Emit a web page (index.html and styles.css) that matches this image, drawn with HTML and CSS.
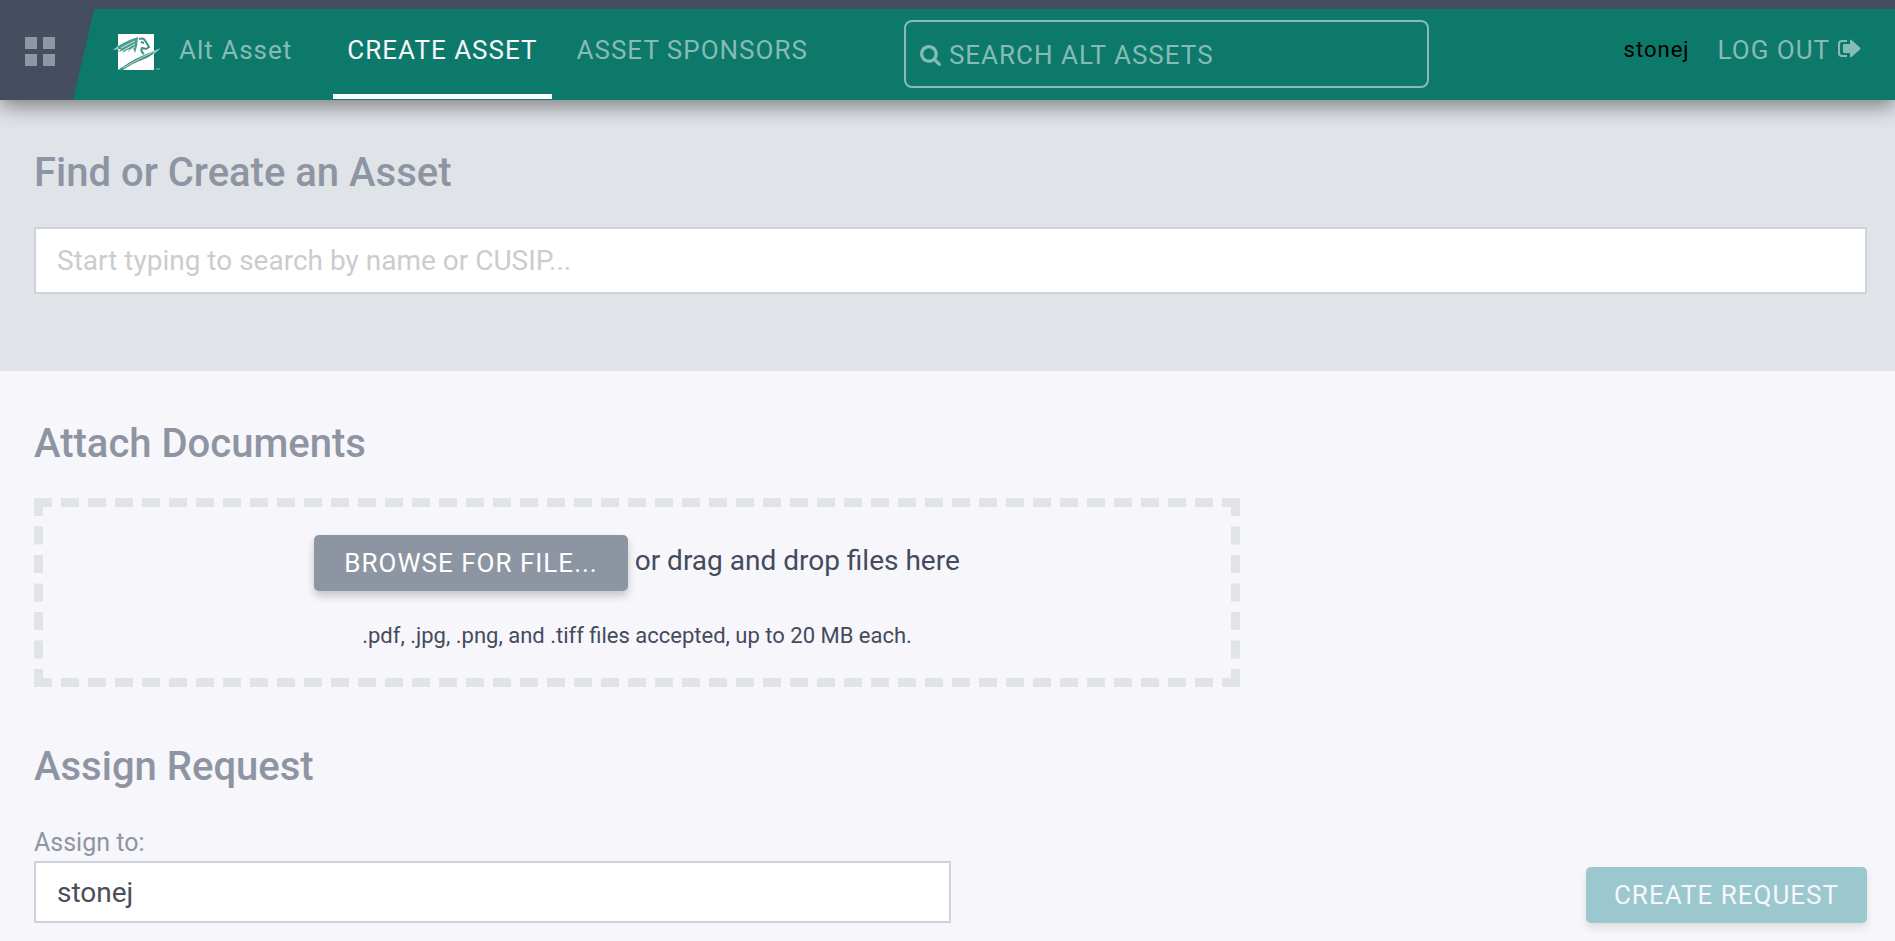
FILE: index.html
```html
<!DOCTYPE html>
<html lang="en">
<head>
<meta charset="utf-8">
<title>Alt Asset</title>
<link rel="stylesheet" href="styles.css">
</head>
<body>
<header class="header">
  <button class="apps" type="button" aria-label="Applications">
    <span class="apps-shape"></span>
    <svg class="apps-icon" viewBox="0 0 30 30" aria-hidden="true"><path d="M0 0h12v12H0zM18 0h12v12H18zM0 17h12v12H0zM18 17h12v12H18z"/></svg>
  </button>
  <a class="brand" href="#">
    <svg class="brand-logo" viewBox="0 0 48 36" aria-hidden="true">
      <path class="logo-paper" d="M5 0h36v36H5z"/>
      <path class="logo-mane" d="M0 16Q9 8 25 3Q25 11 22 19L20 14L15 18L16 15L9 19L11 16L5 18L8 15z"/>
      <path class="logo-gaps" d="M8 14L22 7M11 16L22 10M15 17L22 13"/>
      <path class="logo-head" d="M26 5Q31 3 33 8L36 13L33 15L29 14Q27 17 31 20M28 8L31 9"/>
      <path class="logo-slope" d="M5 36Q19 26 31 21Q39 18 47 14Q38 23 29 26Q20 29 10 36z"/>
      <path class="logo-light" d="M10 34Q22 27 32 22L42 17"/>
      <path class="logo-tips" d="M0 16L5 12V15zM41 17L48 14L41 20z"/>
      <path class="logo-mark" d="M43 35h4"/>
    </svg>
    <span>Alt Asset</span>
  </a>
  <nav class="nav">
    <a class="tab tab-active" href="#">CREATE ASSET</a>
    <a class="tab" href="#">ASSET SPONSORS</a>
  </nav>
  <label class="search">
    <svg class="search-icon" viewBox="0 0 1664 1664" aria-hidden="true"><path d="M1152 704q0-185-131.500-316.500T704 256 387.500 387.500 256 704t131.500 316.500T704 1152t316.500-131.500T1152 704zm512 832q0 52-38 90t-90 38q-54 0-90-38l-343-342q-179 124-399 124-143 0-273.500-55.500t-225-150-150-225T0 704t55.500-273.500 150-225 225-150T704 0t273.500 55.500 225 150 150 225T1408 704q0 220-124 399l343 343q37 37 37 90z"/></svg>
    <input class="search-input" type="text" placeholder="SEARCH ALT ASSETS" aria-label="Search alt assets">
  </label>
  <div class="account">
    <span class="user">stonej</span>
    <a class="logout" href="#">LOG OUT
      <svg class="logout-icon" viewBox="0 0 24 20" aria-hidden="true"><path class="door" d="M10 2H5Q2 2 2 5v9q0 3 3 3h5"/><path class="arrow" d="M7 5h6V1.500q0-1.500 1.500-.5l8.500 7.500q1 1 0 2l-8.500 7.500q-1.500 1-1.500-.5V14H7q-1 0-1-1V6q0-1 1-1z"/></svg></a>
  </div>
</header>
<main>
  <section class="finder">
    <h2 class="title"><label for="asset">Find or Create an Asset</label></h2>
    <input class="field asset-field" id="asset" type="text" placeholder="Start typing to search by name or CUSIP...">
  </section>
  <form class="request">
    <h2 class="title">Attach Documents</h2>
    <div class="dropzone">
      <div class="drop-row">
        <button class="button button-browse" type="button">BROWSE FOR FILE...</button>
        <span>or drag and drop files here</span>
      </div>
      <p class="hint">.pdf, .jpg, .png, and .tiff files accepted, up to 20 MB each.</p>
    </div>
    <h2 class="title">Assign Request</h2>
    <div class="assign">
      <div class="assignee">
        <label class="label" for="assignee">Assign to:</label>
        <input class="field" id="assignee" type="text" value="stonej">
      </div>
      <button class="button button-submit" type="submit" disabled>CREATE REQUEST</button>
    </div>
  </form>
</main>
</body>
</html>
```
FILE: styles.css
```css
* {
  box-sizing: border-box;
}

body {
  margin: 0;
  background: #f7f6fb;
  color: #434b5c;
  font: 400 28px/36px Roboto, sans-serif;
}

button, input {
  font: inherit;
}

.header {
  position: relative;
  z-index: 1;
  display: flex;
  align-items: stretch;
  height: 100px;
  border-top: 9px solid #454d60;
  background: #0c796b;
  box-shadow: 0 6px 20px rgba(0, 0, 0, .45);
  color: #86bcb5;
  font-size: 26px;
  letter-spacing: 1px;
}

.header a {
  color: inherit;
  text-decoration: none;
}

.apps {
  display: flex;
  position: relative;
  flex: none;
  width: 94px;
  padding: 28px 0 0 25px;
  border: 0;
  background: none;
}

.apps-shape {
  position: absolute;
  inset: 0;
  background: linear-gradient(103deg, transparent 80%, rgba(30, 35, 50, .3)), #454d60;
  clip-path: polygon(0 0, 100% 0, 73px 100%, 0 100%);
}

.apps-icon {
  position: relative;
  width: 30px;
  height: 30px;
  fill: #9096a3;
}

.brand {
  display: flex;
  flex: none;
  gap: 18px;
  padding: 23px 0 0 19px;
}

.brand-logo {
  width: 48px;
  height: 36px;
  margin-top: 2px;
}

.logo-paper {
  fill: #fff;
}

.logo-mane {
  fill: #4b9b91;
}

.logo-gaps {
  stroke: #d5e9e6;
  stroke-width: 1;
}

.logo-head {
  fill: none;
  stroke: #3c9287;
  stroke-width: 2;
}

.logo-slope {
  fill: #3c9287;
}

.logo-light {
  fill: none;
  stroke: #b5d7d3;
  stroke-width: 1;
}

.logo-tips {
  fill: #9fccc6;
}

.logo-mark {
  stroke: #86bcb5;
}

.nav {
  display: flex;
  flex: none;
  gap: 11px;
  margin-left: 41px;
}

.tab {
  height: 90px;
  padding: 23px 14px 0;
  border-bottom: 5px solid transparent;
}

.header .tab-active {
  border-color: #fff;
  color: #f7f6fb;
}

.search {
  display: flex;
  align-items: center;
  gap: 8px;
  width: 525px;
  height: 68px;
  margin: 11px 0 0 82px;
  padding: 2px 14px 0;
  border: 2px solid #86bcb5;
  border-radius: 8px;
}

.search-icon {
  flex: none;
  width: 21px;
  height: 21px;
  fill: #86bcb5;
}

.search-input {
  flex: 1;
  min-width: 0;
  padding: 0;
  border: 0;
  outline: 0;
  background: none;
  color: #fff;
  letter-spacing: 1px;
}

.search-input::placeholder {
  color: #86bcb5;
  opacity: 1;
}

.account {
  display: flex;
  gap: 28px;
  margin-left: auto;
  padding: 23px 34px 0 0;
}

.user {
  color: #000;
  font-size: 22px;
}

.logout {
  white-space: nowrap;
}

.logout-icon {
  width: 24px;
  height: 20px;
}

.door {
  fill: none;
  stroke: #86bcb5;
  stroke-width: 2;
}

.arrow {
  fill: #86bcb5;
}

.finder {
  padding: 49px 28px 77px 34px;
  background: #e0e3e8;
}

.title {
  margin: 0;
  color: #8e95a2;
  font-size: 40px;
  font-weight: 500;
  line-height: 48px;
}

.field {
  display: block;
  width: 100%;
  height: 62px;
  padding: 0 21px;
  border: 2px solid #ced2da;
  border-radius: 0;
  outline: 0;
  background: #fff;
  color: #495057;
}

.field::placeholder {
  color: #ccc;
  opacity: 1;
}

.asset-field {
  height: 67px;
  margin-top: 30px;
}

.request {
  padding: 49px 28px 18px 34px;
}

.dropzone {
  width: 65.8%;
  margin: 30px 0 56px;
  padding: 28px 20px 24px;
  border: 9px dashed #e0e4e8;
  text-align: center;
}

.drop-row {
  display: flex;
  justify-content: center;
  gap: 7px;
  line-height: 52px;
}

.button {
  height: 56px;
  padding: 0 28px;
  border: 0;
  border-radius: 5px;
  background: #8e95a2;
  box-shadow: 0 5px 8px rgba(0, 0, 0, .2);
  color: #fff;
  font-size: 26px;
  letter-spacing: 1px;
}

.button-browse {
  padding: 0 30px;
}

.hint {
  margin: 27px 0 0;
  font-size: 22px;
}

.assign {
  display: flex;
  align-items: flex-end;
  justify-content: space-between;
  margin-top: 34px;
}

.assignee {
  width: 50%;
}

.label {
  display: block;
  color: #8e95a2;
  font-size: 25px;
}

.button-submit {
  background: #9ac8ce;
  box-shadow: 0 5px 8px rgba(0, 0, 0, .1);
  color: #f7f6fb;
}
```
